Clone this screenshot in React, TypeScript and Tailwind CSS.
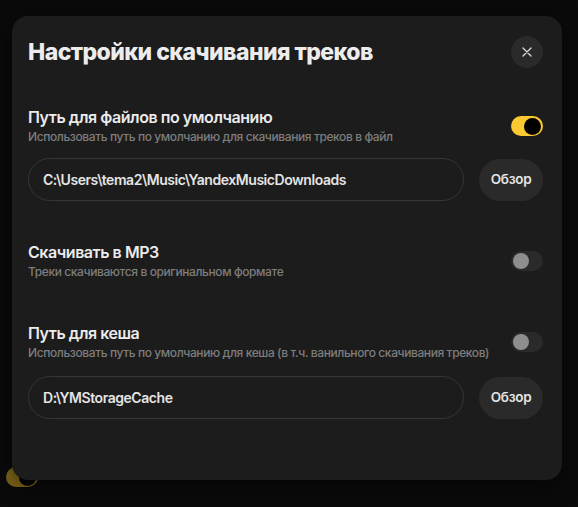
import React from "react";

function Toggle({ on }: { on: boolean }) {
  return on ? (
    <div className="w-[32px] h-[20px] rounded-full bg-[#fcc930] flex items-center justify-end px-[2px] shrink-0">
      <div className="w-[17px] h-[17px] rounded-full bg-black" />
    </div>
  ) : (
    <div className="w-[32px] h-[20px] rounded-full bg-[#2a2a2a] flex items-center justify-start px-[2px] shrink-0">
      <div className="w-[16px] h-[16px] rounded-full bg-[#8e8e8e]" />
    </div>
  );
}

function Row({ title, desc, on }: { title: string; desc: string; on: boolean }) {
  return (
    <div className="flex items-center justify-between">
      <div className="flex flex-col">
        <div className="text-[16px] leading-[20px] font-semibold text-[#ebebeb] tracking-[-0.45px]">{title}</div>
        <div className="mt-[2px] text-[12px] leading-[16px] font-medium text-[#7e7e7e] tracking-[-0.4px]">{desc}</div>
      </div>
      <Toggle on={on} />
    </div>
  );
}

function PathInput({ value, mt }: { value: string; mt: string }) {
  return (
    <div className={`${mt} flex items-center gap-[15px]`}>
      <div className="flex-1 h-[43px] rounded-full border border-[#363636] flex items-center pl-[14px] text-[14px] font-semibold text-[#e4e4e4] tracking-[-0.45px]">
        {value}
      </div>
      <div className="w-[64px] h-[42px] rounded-full bg-[#2a2a2a] flex items-center justify-center text-[13.5px] font-semibold text-[#e4e4e4] tracking-[-0.3px]">
        Обзор
      </div>
    </div>
  );
}

export default function App() {
  return (
    <div
      className="relative w-[578px] h-[507px] bg-[#0a0a0a] overflow-hidden"
      style={{ fontFamily: "Inter, 'Noto Sans', sans-serif" }}
    >
      <div className="absolute left-[6px] top-[467px] w-[32px] h-[20px] rounded-full bg-[#7b6318] flex items-center justify-end px-[2px]">
        <div className="w-[17px] h-[17px] rounded-full bg-black" />
      </div>
      <div className="relative z-10 ml-[12px] mt-[16px] w-[550px] h-[464px] rounded-[16px] bg-[#1c1c1c] pl-[16px] pr-[19px] pt-[20px] shadow-[0_4px_20px_rgba(0,0,0,0.5)]">
        <div className="flex items-center justify-between h-[32px]">
          <div className="text-[23px] leading-[32px] font-extrabold text-[#ececec] tracking-[-0.55px]">
            Настройки скачивания треков
          </div>
          <div className="w-[32px] h-[32px] rounded-full bg-[#2a2a2a] flex items-center justify-center">
            <svg width="10" height="10" viewBox="0 0 10 10">
              <path d="M1 1L9 9M9 1L1 9" stroke="#d6d6d6" strokeWidth="1.4" strokeLinecap="round" />
            </svg>
          </div>
        </div>

        <div className="mt-[39px]">
          <Row
            title="Путь для файлов по умолчанию"
            desc="Использовать путь по умолчанию для скачивания треков в файл"
            on={true}
          />
          <PathInput value="C:\Users\tema2\Music\YandexMusicDownloads" mt="mt-[13px]" />
        </div>

        <div className="mt-[41px]">
          <Row title="Скачивать в MP3" desc="Треки скачиваются в оригинальном формате" on={false} />
        </div>

        <div className="mt-[43px]">
          <Row
            title="Путь для кеша"
            desc="Использовать путь по умолчанию для кеша (в т.ч. ванильного скачивания треков)"
            on={false}
          />
          <PathInput value="D:\YMStorageCache" mt="mt-[15px]" />
        </div>
      </div>
    </div>
  );
}
